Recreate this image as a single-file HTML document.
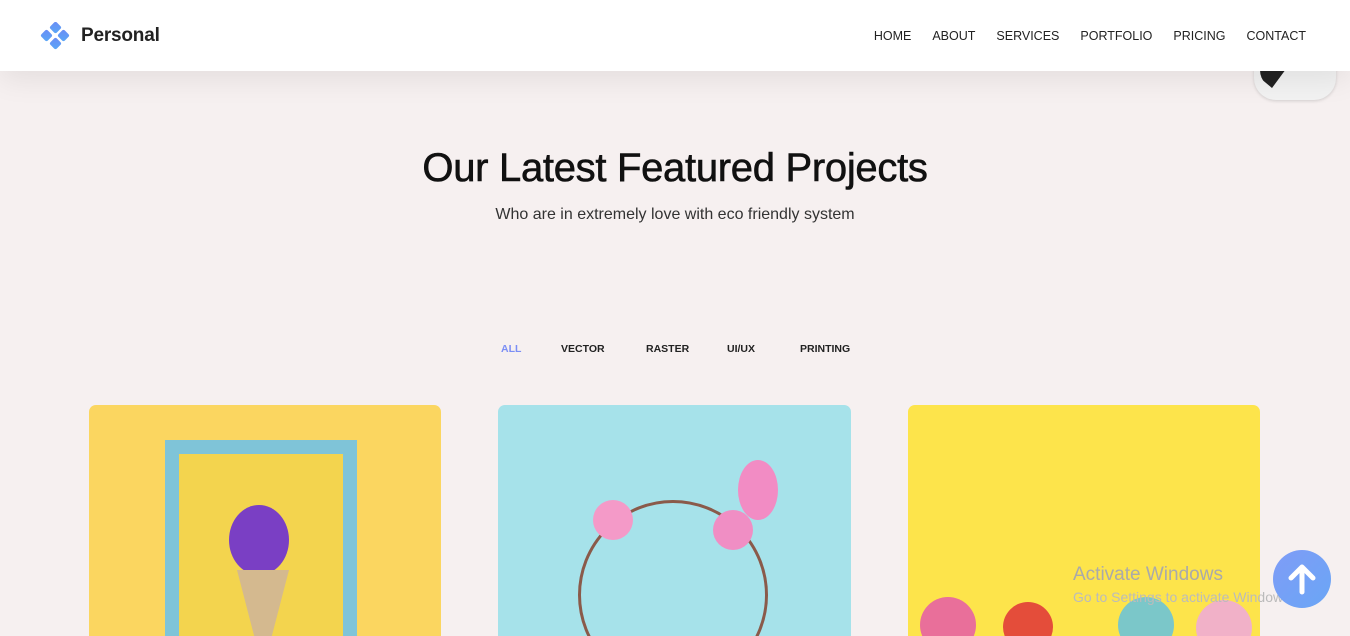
<!DOCTYPE html>
<html><head><meta charset="utf-8"><style>
*{margin:0;padding:0;box-sizing:border-box}
html,body{width:1350px;height:636px;overflow:hidden}
body{background:#f6f0f0;font-family:"Liberation Sans",sans-serif;position:relative}
header{position:absolute;top:0;left:0;width:1350px;height:71px;background:#fff;box-shadow:0 8px 30px rgba(0,0,0,.08);z-index:5}
.logo{position:absolute;left:40px;top:22px}
.brand{position:absolute;left:81px;top:25px;font-size:19px;font-weight:bold;color:#222;letter-spacing:-.2px}
nav{position:absolute;top:29px;right:44px;display:flex;gap:21px;font-size:12.5px;color:#222}
.toggle{position:absolute;left:1254px;top:50px;width:82px;height:50px;background:#f2f2f2;border-radius:0 0 22px 22px;box-shadow:0 1px 3px rgba(0,0,0,.15);z-index:4;overflow:hidden}
.toggle:before{content:"";position:absolute;left:6px;top:0;width:40px;height:40px;background:#222;clip-path:polygon(0 0,100% 0,30% 95%,0 70%);border-radius:0 0 0 20px}
h1{position:absolute;top:146px;width:100%;text-align:center;font-size:40px;font-weight:normal;color:#111;letter-spacing:-.3px;-webkit-text-stroke:.6px #111}
.sub{position:absolute;top:206px;width:100%;text-align:center;font-size:16px;color:#333}
.filters{position:absolute;top:343px;left:0;width:100%;font-size:10.5px;font-weight:bold;color:#222}
.filters span{position:absolute}
.card{position:absolute;top:405px;height:231px;border-radius:7px 7px 0 0;overflow:hidden}
.act{position:absolute;left:1073px;top:564px;color:#aaa;font-size:19px}
.act2{position:absolute;left:1073px;top:589px;color:#bbb;font-size:14px}
.up{position:absolute;left:1273px;top:550px;width:58px;height:58px;border-radius:50%;background:linear-gradient(135deg,#7f9cf7,#6aa6f5);}
</style></head><body>
<header>
<svg class="logo" width="30" height="28" viewBox="0 0 30 28"><defs><linearGradient id="g" x1="0" y1="0" x2="1" y2="1"><stop offset="0" stop-color="#6b8cf5"/><stop offset="1" stop-color="#5aa8f7"/></linearGradient></defs>
<g fill="url(#g)"><rect x="11" y="1" width="9" height="9" rx="2" transform="rotate(45 15.5 5.5)"/><rect x="2" y="9" width="9" height="9" rx="2" transform="rotate(45 6.5 13.5)"/><rect x="19" y="9" width="9" height="9" rx="2" transform="rotate(45 23.5 13.5)"/><rect x="11" y="17" width="9" height="9" rx="2" transform="rotate(45 15.5 21.5)"/></g></svg>
<div class="brand">Personal</div>
<nav><span>HOME</span><span>ABOUT</span><span>SERVICES</span><span>PORTFOLIO</span><span>PRICING</span><span>CONTACT</span></nav>
</header>
<div class="toggle"></div>
<h1>Our Latest Featured Projects</h1>
<div class="sub">Who are in extremely love with eco friendly system</div>
<div class="filters"><span style="left:501px;color:#7b8ef5">ALL</span><span style="left:561px">VECTOR</span><span style="left:646px">RASTER</span><span style="left:727px">UI/UX</span><span style="left:800px">PRINTING</span></div>
<div class="card" style="left:89px;width:352px;background:#fbd660">
<div style="position:absolute;left:76px;top:35px;width:192px;height:220px;border:14px solid #7fc4d8;border-bottom:none;background:#f3d44e"></div>
<div style="position:absolute;left:140px;top:100px;width:60px;height:70px;border-radius:50%;background:#7a3fc4"></div>
<div style="position:absolute;left:148px;top:165px;width:52px;height:80px;background:#d4b98f;clip-path:polygon(0 0,100% 0,60% 100%,40% 100%)"></div>
</div>
<div class="card" style="left:498px;width:353px;background:#a6e2ea">
<div style="position:absolute;left:80px;top:95px;width:190px;height:190px;border-radius:50%;border:3px solid #8a5a4a"></div>
<div style="position:absolute;left:240px;top:55px;width:40px;height:60px;border-radius:50%;background:#f28cc4"></div>
<div style="position:absolute;left:95px;top:95px;width:40px;height:40px;border-radius:50%;background:#f49ac8"></div>
<div style="position:absolute;left:215px;top:105px;width:40px;height:40px;border-radius:50%;background:#f08ec4"></div>
</div>
<div class="card" style="left:908px;width:352px;background:#fde44b">
<div style="position:absolute;left:12px;top:192px;width:56px;height:56px;border-radius:50%;background:#e96f9a"></div>
<div style="position:absolute;left:95px;top:197px;width:50px;height:50px;border-radius:50%;background:#e44d3a"></div>
<div style="position:absolute;left:210px;top:192px;width:56px;height:56px;border-radius:50%;background:#7bc7c9"></div>
<div style="position:absolute;left:288px;top:195px;width:56px;height:56px;border-radius:50%;background:#f1b1c8"></div>
</div>
<div class="act">Activate Windows</div>
<div class="act2">Go to Settings to activate Windows.</div>
<div class="up"><svg width="58" height="58" viewBox="0 0 58 58"><path d="M29 42V17M18 28l11-11 11 11" stroke="#fff" stroke-width="5" fill="none" stroke-linecap="round" stroke-linejoin="round"/></svg></div>
</body></html>
